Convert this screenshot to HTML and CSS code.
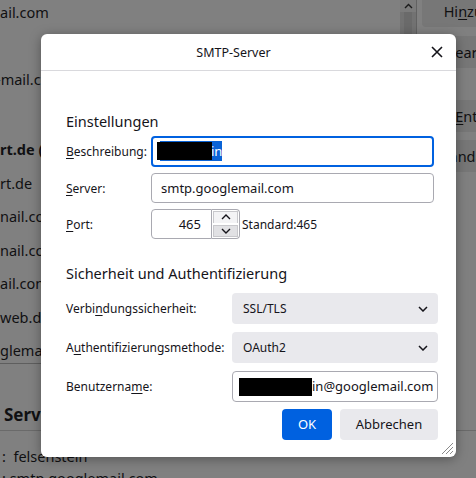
FILE: index.html
```html
<!DOCTYPE html>
<html lang="de">
<head>
<meta charset="utf-8">
<title>SMTP-Server</title>
<link rel="stylesheet" href="styles.css">
</head>
<body>
<div class="page">
  <div class="top">
    <div class="list">
      <div class="row">ail.com</div>
      <div class="row"></div>
      <div class="row shift">-mail.com</div>
      <div class="row"></div>
      <div class="row group">rt.de (Standard)</div>
      <div class="row">rt.de</div>
      <div class="row">nail.com</div>
      <div class="row">nail.com</div>
      <div class="row">ail.com</div>
      <div class="row">web.de</div>
      <div class="row">glemail.com</div>
    </div>
    <div class="scrollbar">
      <div class="sb-up"><svg width="9" height="6" viewBox="0 0 9 6"><path d="M1 5 L4.5 1.5 L8 5" fill="none" stroke="#1a1a1a" stroke-width="1.4"/></svg></div>
      <div class="sb-thumb"></div>
    </div>
    <div class="side">
      <div class="side-btn b1">Hi<u>n</u>zufügen…</div>
      <div class="side-btn b2">Bearbeiten…</div>
      <div class="side-btn b3"><u>E</u>ntfernen</div>
      <div class="side-btn b4">Als Standard festlegen</div>
    </div>
  </div>
  <div class="srv-head">Server (SMTP)</div>
  <div class="srv-line first">:&nbsp; felsenstein</div>
  <div class="srv-line">: smtp.googlemail.com</div>
</div>

<div class="dialog">
  <div class="dlg-head">
    <div class="dlg-title">SMTP-Server</div>
    <div class="dlg-close"><svg width="12" height="12" viewBox="0 0 12 12"><path d="M1 1 L11 11 M11 1 L1 11" stroke="#15141a" stroke-width="1.6" fill="none"/></svg></div>
  </div>
  <div class="dlg-body">
    <div class="sec">Einstellungen</div>
    <div class="form1">
      <div class="lbl"><u>B</u>eschreibung:</div>
      <div class="field focus"><span class="sel"><span class="sel-gap"></span>in</span><span class="redact-a"></span></div>
      <div class="lbl"><u>S</u>erver:</div>
      <div class="field">smtp.googlemail.com</div>
      <div class="lbl"><u>P</u>ort:</div>
      <div class="port-row">
        <div class="field port">465</div>
        <div class="spin">
          <div class="spin-up"><svg width="10" height="6" viewBox="0 0 10 6"><path d="M1 5 L5 1 L9 5" fill="none" stroke="#15141a" stroke-width="1.4"/></svg></div>
          <div class="spin-down"><svg width="10" height="6" viewBox="0 0 10 6"><path d="M1 1 L5 5 L9 1" fill="none" stroke="#15141a" stroke-width="1.4"/></svg></div>
        </div>
        <span class="std">Standard:465</span>
      </div>
    </div>
    <div class="sec sec2">Sicherheit und Authentifizierung</div>
    <div class="form2">
      <div class="lbl">Verbi<u>n</u>dungssicherheit:</div>
      <div class="select"><span>SSL/TLS</span><svg width="10" height="6" viewBox="0 0 10 6"><path d="M1 1 L5 5 L9 1" fill="none" stroke="#15141a" stroke-width="1.5"/></svg></div>
      <div class="lbl">A<u>u</u>thentifizierungsmethode:</div>
      <div class="select"><span>OAuth2</span><svg width="10" height="6" viewBox="0 0 10 6"><path d="M1 1 L5 5 L9 1" fill="none" stroke="#15141a" stroke-width="1.5"/></svg></div>
      <div class="lbl">Benutzerna<u>m</u>e:</div>
      <div class="field user"><span class="redact-b"></span>in@googlemail.com</div>
    </div>
    <div class="actions">
      <div class="btn primary">OK</div>
      <div class="btn">Abbrechen</div>
    </div>
  </div>
  <svg class="grip" width="14" height="14" viewBox="0 0 14 14"><path d="M13 2 L2 13 M13 6 L6 13 M13 10 L10 13" stroke="#8a8a8a" stroke-width="1" fill="none"/></svg>
</div>
</body>
</html>
```

FILE: styles.css
```css
* { box-sizing: border-box; }
html, body { margin: 0; padding: 0; width: 476px; height: 478px; overflow: hidden; }
body {
  position: relative;
  background: #808080;
  font-family: "Noto Sans", "Open Sans", sans-serif;
  color: #101012;
}
u { text-decoration-thickness: 1px; text-underline-offset: 2px; }

/* background page */
.page { display: flex; flex-direction: column; }
.top { display: flex; height: 364px; }
.list {
  flex: none;
  width: 400px;
  height: 368px;
  margin-top: -4px;
  overflow: hidden;
  border-bottom: 1px solid #5e5e5e;
  display: flex;
  flex-direction: column;
  font-size: 14.5px;
}
.row { height: 33.5px; line-height: 33.5px; flex: none; white-space: nowrap; }
.row.shift { text-indent: -4px; }
.row.group { margin-top: 3px; font-weight: 700; }
.scrollbar { flex: none; width: 17px; border-right: 1px solid #626262; background: #727272; display: flex; flex-direction: column; }
.sb-up { height: 12px; background: #7b7b7b; display: flex; justify-content: center; align-items: center; }
.sb-thumb { height: 200px; background: #6a6a6a; margin: 0 4px; }
.side { flex: 1; min-width: 0; padding-left: 5px; display: flex; flex-direction: column; overflow: hidden; }
.side-btn {
  width: 134px; height: 32px; flex: none;
  background: #777777; border-radius: 4px;
  font-size: 14.5px; line-height: 32px; white-space: nowrap;
  display: flex; justify-content: center; overflow: visible;
}
.b1 { margin-top: -5px; }
.b2 { margin-top: 9px; }
.b3 { margin-top: 32px; }
.b4 { margin-top: 8px; }
.srv-head {
  margin-top: 39px; padding: 0 4px 4px; height: 28px;
  font-size: 17px; font-weight: 700; line-height: 24px;
  border-bottom: 1px solid #6a6a6a;
}
.srv-line { font-size: 14.5px; line-height: 22px; padding-left: 2px; white-space: nowrap; }
.srv-line.first { margin-top: 14px; }

/* dialog */
.dialog {
  position: absolute; left: 41px; top: 34px; width: 415px; height: 423px;
  background: #fff; border-radius: 6px;
  box-shadow: 0 2px 12px rgba(0,0,0,0.35);
  color: #15141a;
  font-size: 12px;
  display: flex; flex-direction: column;
}
.dlg-head {
  height: 37px; flex: none; display: flex; align-items: center;
  border-bottom: 1px solid #d9d9dd; padding-right: 8px;
}
.dlg-title { flex: 1; text-align: center; font-size: 12.5px; }
.dlg-close { width: 22px; height: 22px; display: flex; align-items: center; justify-content: center; }
.dlg-body { padding: 40px 18px 0 25px; display: flex; flex-direction: column; }
.sec { font-size: 14.5px; line-height: 20px; height: 20px; }
.sec2 { margin-top: 24px; }

.form1 {
  display: grid; grid-template-columns: 85px 1fr; row-gap: 6px;
  margin-top: 5px; margin-right: 4px; align-items: center;
}
.form2 {
  display: grid; grid-template-columns: 166px 1fr; row-gap: 8px;
  margin-top: 10px; align-items: center;
}
.lbl { white-space: nowrap; }
.field {
  position: relative;
  height: 30px; border: 1px solid #a9a9b1; border-radius: 4px;
  padding: 0 9px; line-height: 28px; white-space: nowrap; overflow: hidden;
  font-size: 13px;
}
.field.focus { height: 31px; border: 2px solid #0061e0; padding: 0 7px; line-height: 27px; }
.sel { background: #0a63d6; color: #fff; padding: 1px 0; }
.sel-gap { display: inline-block; width: 51px; height: 1px; }
.redact-a { position: absolute; left: 4px; top: 4px; width: 55px; height: 18px; background: #000; }

.port-row { display: flex; align-items: center; }
.field.port { width: 61px; text-align: right; padding-right: 10px; border-radius: 4px 0 0 4px; }
.spin { width: 28px; height: 30px; display: flex; flex-direction: column; border: 1px solid #a9a9b1; border-left: none; border-radius: 0 4px 4px 0; overflow: hidden; }
.spin-up, .spin-down { flex: 1; display: flex; align-items: center; justify-content: center; margin: 1px; }
.spin-up { background: #f3f3f5; border: 1px solid #c8c8cc; border-bottom: none; }
.spin-down { background: #e1e1e4; border: 1px solid #c8c8cc; }
.std { margin-left: 2px; }

.select {
  height: 31px; background: #e9e9ed; border-radius: 4px;
  display: flex; align-items: center; justify-content: space-between;
  padding: 0 10px 0 11px;
}
.field.user { height: 31px; padding: 0 6px; line-height: 29px; }
.redact-b { display: inline-block; width: 73px; height: 18px; background: #000; vertical-align: middle; margin-top: -2px; }

.actions { display: flex; justify-content: flex-end; gap: 8px; margin-top: 7px; }
.btn {
  height: 31px; border-radius: 4px; background: #e9e9ed;
  line-height: 31px; text-align: center; font-size: 13px; padding: 0 11px;
}
.btn.primary { background: #0061e0; color: #fff; width: 50px; }
.btn:not(.primary) { width: 98px; }
.grip { position: absolute; right: 2px; bottom: 2px; }
```
